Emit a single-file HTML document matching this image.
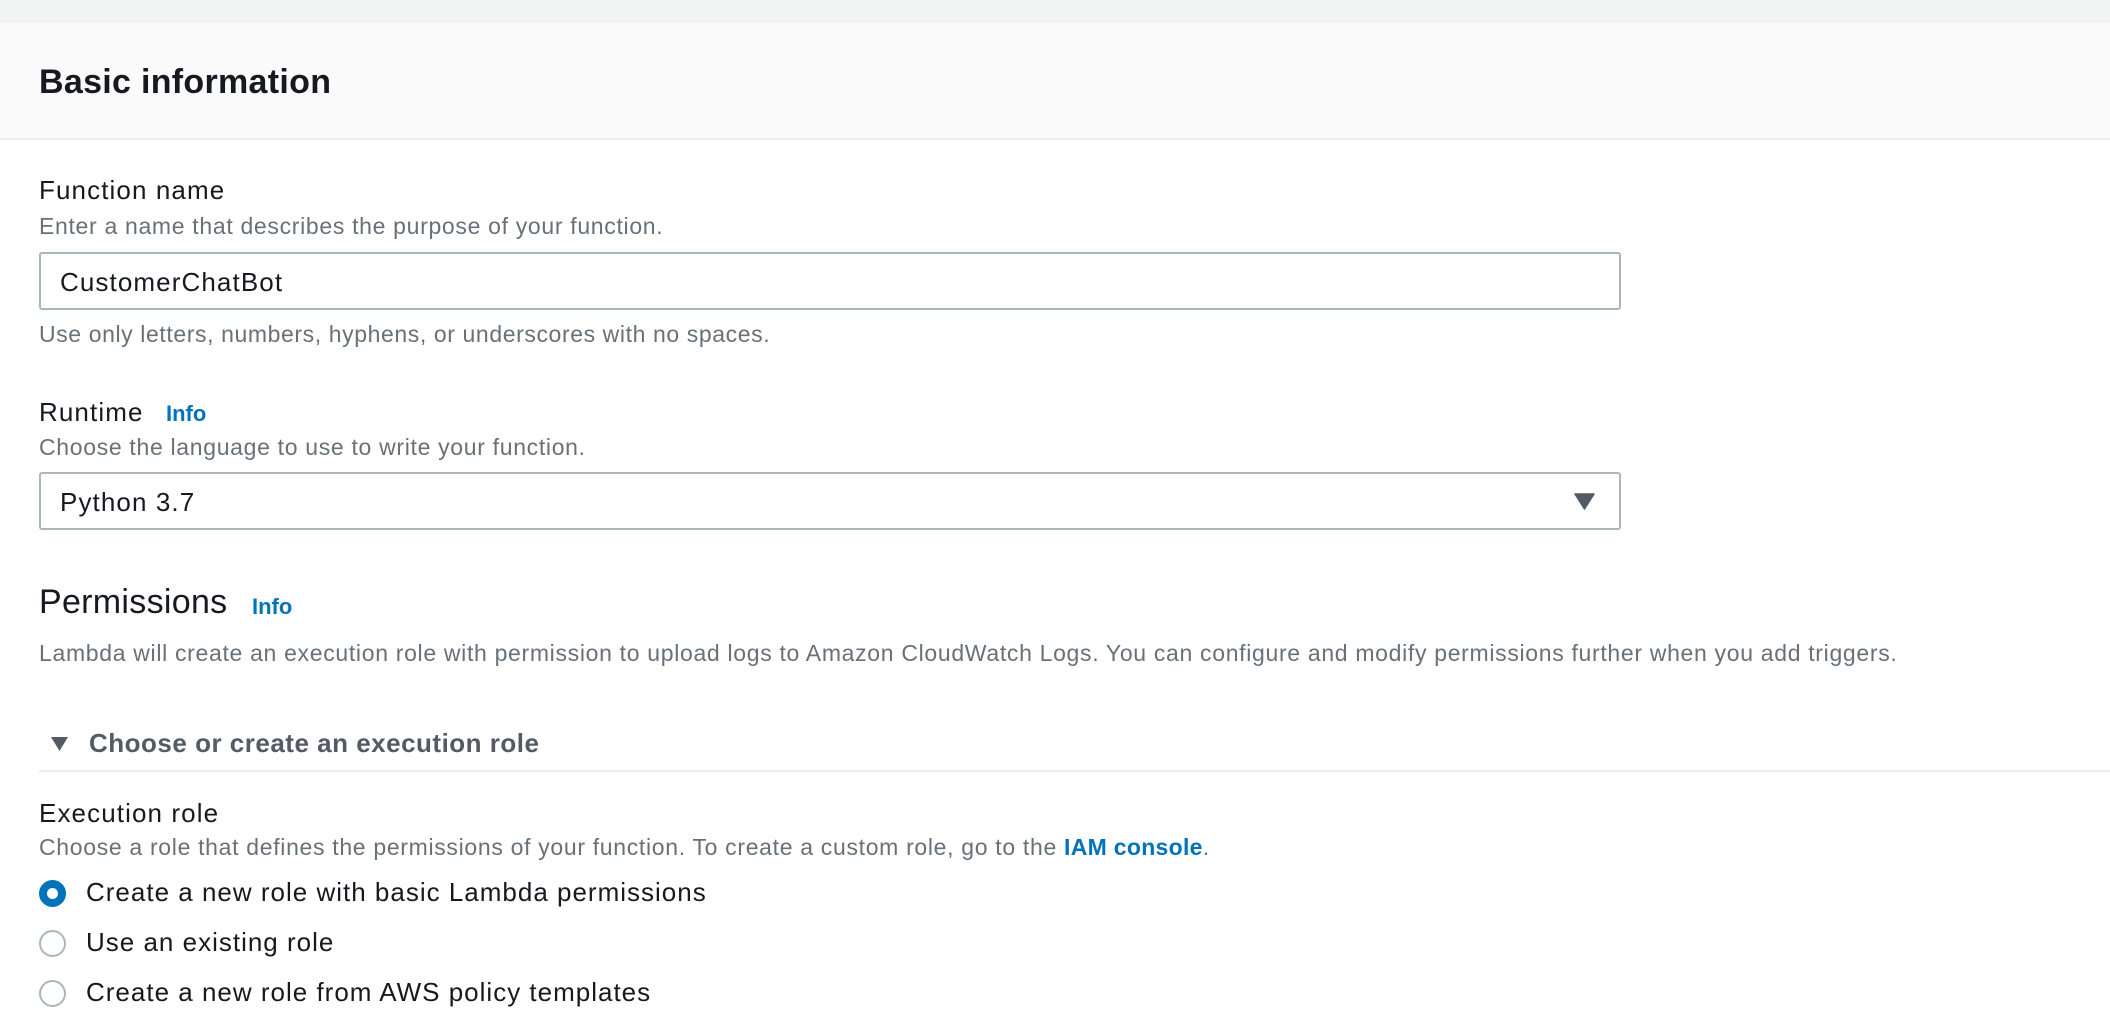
<!DOCTYPE html>
<html><head><meta charset="utf-8"><style>
*{margin:0;padding:0;box-sizing:border-box}
body{width:2110px;height:1028px;overflow:hidden;background:#fff;font-family:"Liberation Sans",sans-serif;position:relative;color:#16191f}
.a{position:absolute;white-space:nowrap;line-height:1}
.lbl{font-size:26px;color:#16191f;letter-spacing:1.1px}
.hlp{font-size:23px;color:#687078;letter-spacing:0.68px}
.info{font-size:22px;color:#0073bb;font-weight:bold}
.box{position:absolute;left:39px;width:1582px;border:2px solid #aab7b8;border-radius:3px;background:#fff}
.radio{position:absolute;left:39px;width:27px;height:27px;border-radius:50%;border:2px solid #aab7b8;background:#fff}
.radio.on{border:8px solid #0073bb}
</style></head><body>
<div style="position:absolute;left:0;top:0;width:2110px;height:22px;background:#f2f3f3;border-bottom:1px solid #eaeded"></div>
<div style="position:absolute;left:0;top:22px;width:2110px;height:118px;background:#fafafa;border-bottom:2px solid #eaeded"></div>
<div class="a" style="left:39px;top:65px;font-size:34px;font-weight:bold;color:#16191f;letter-spacing:0.3px">Basic information</div>

<div class="a lbl" style="left:39px;top:177px">Function name</div>
<div class="a hlp" style="left:39px;top:215px">Enter a name that describes the purpose of your function.</div>
<div class="box" style="top:252px;height:58px"></div>
<div class="a lbl" style="left:60px;top:269px">CustomerChatBot</div>
<div class="a hlp" style="left:39px;top:323px;letter-spacing:0.6px">Use only letters, numbers, hyphens, or underscores with no spaces.</div>

<div class="a lbl" style="left:39px;top:399px">Runtime</div>
<div class="a info" style="left:166px;top:403px">Info</div>
<div class="a hlp" style="left:39px;top:436px">Choose the language to use to write your function.</div>
<div class="box" style="top:472px;height:58px"></div>
<div class="a lbl" style="left:60px;top:489px">Python 3.7</div>
<svg style="position:absolute;left:1574px;top:493px" width="21" height="17"><path d="M1 1H20L10.5 16Z" fill="#545b64" stroke="#545b64" stroke-linejoin="round" stroke-width="1.5"/></svg>

<div class="a" style="left:39px;top:585px;font-size:34px;color:#16191f;letter-spacing:0.3px">Permissions</div>
<div class="a info" style="left:252px;top:596px">Info</div>
<div class="a hlp" style="left:39px;top:642px">Lambda will create an execution role with permission to upload logs to Amazon CloudWatch Logs. You can configure and modify permissions further when you add triggers.</div>

<svg style="position:absolute;left:50px;top:736px" width="19" height="16"><path d="M1 1H18L9.5 15Z" fill="#545b64"/></svg>
<div class="a" style="left:89px;top:730px;font-size:26px;font-weight:bold;color:#545b64;letter-spacing:0.5px">Choose or create an execution role</div>
<div style="position:absolute;left:39px;top:770px;width:2071px;height:2px;background:#eaeded"></div>

<div class="a lbl" style="left:39px;top:800px">Execution role</div>
<div class="a hlp" style="left:39px;top:836px">Choose a role that defines the permissions of your function. To create a custom role, go to the <b style="color:#0073bb;letter-spacing:0.3px">IAM console</b>.</div>

<div class="radio on" style="top:880px"></div>
<div class="a lbl" style="left:86px;top:879px;letter-spacing:1px">Create a new role with basic Lambda permissions</div>
<div class="radio" style="top:930px"></div>
<div class="a lbl" style="left:86px;top:929px;letter-spacing:1px">Use an existing role</div>
<div class="radio" style="top:980px"></div>
<div class="a lbl" style="left:86px;top:979px;letter-spacing:1px">Create a new role from AWS policy templates</div>
</body></html>
